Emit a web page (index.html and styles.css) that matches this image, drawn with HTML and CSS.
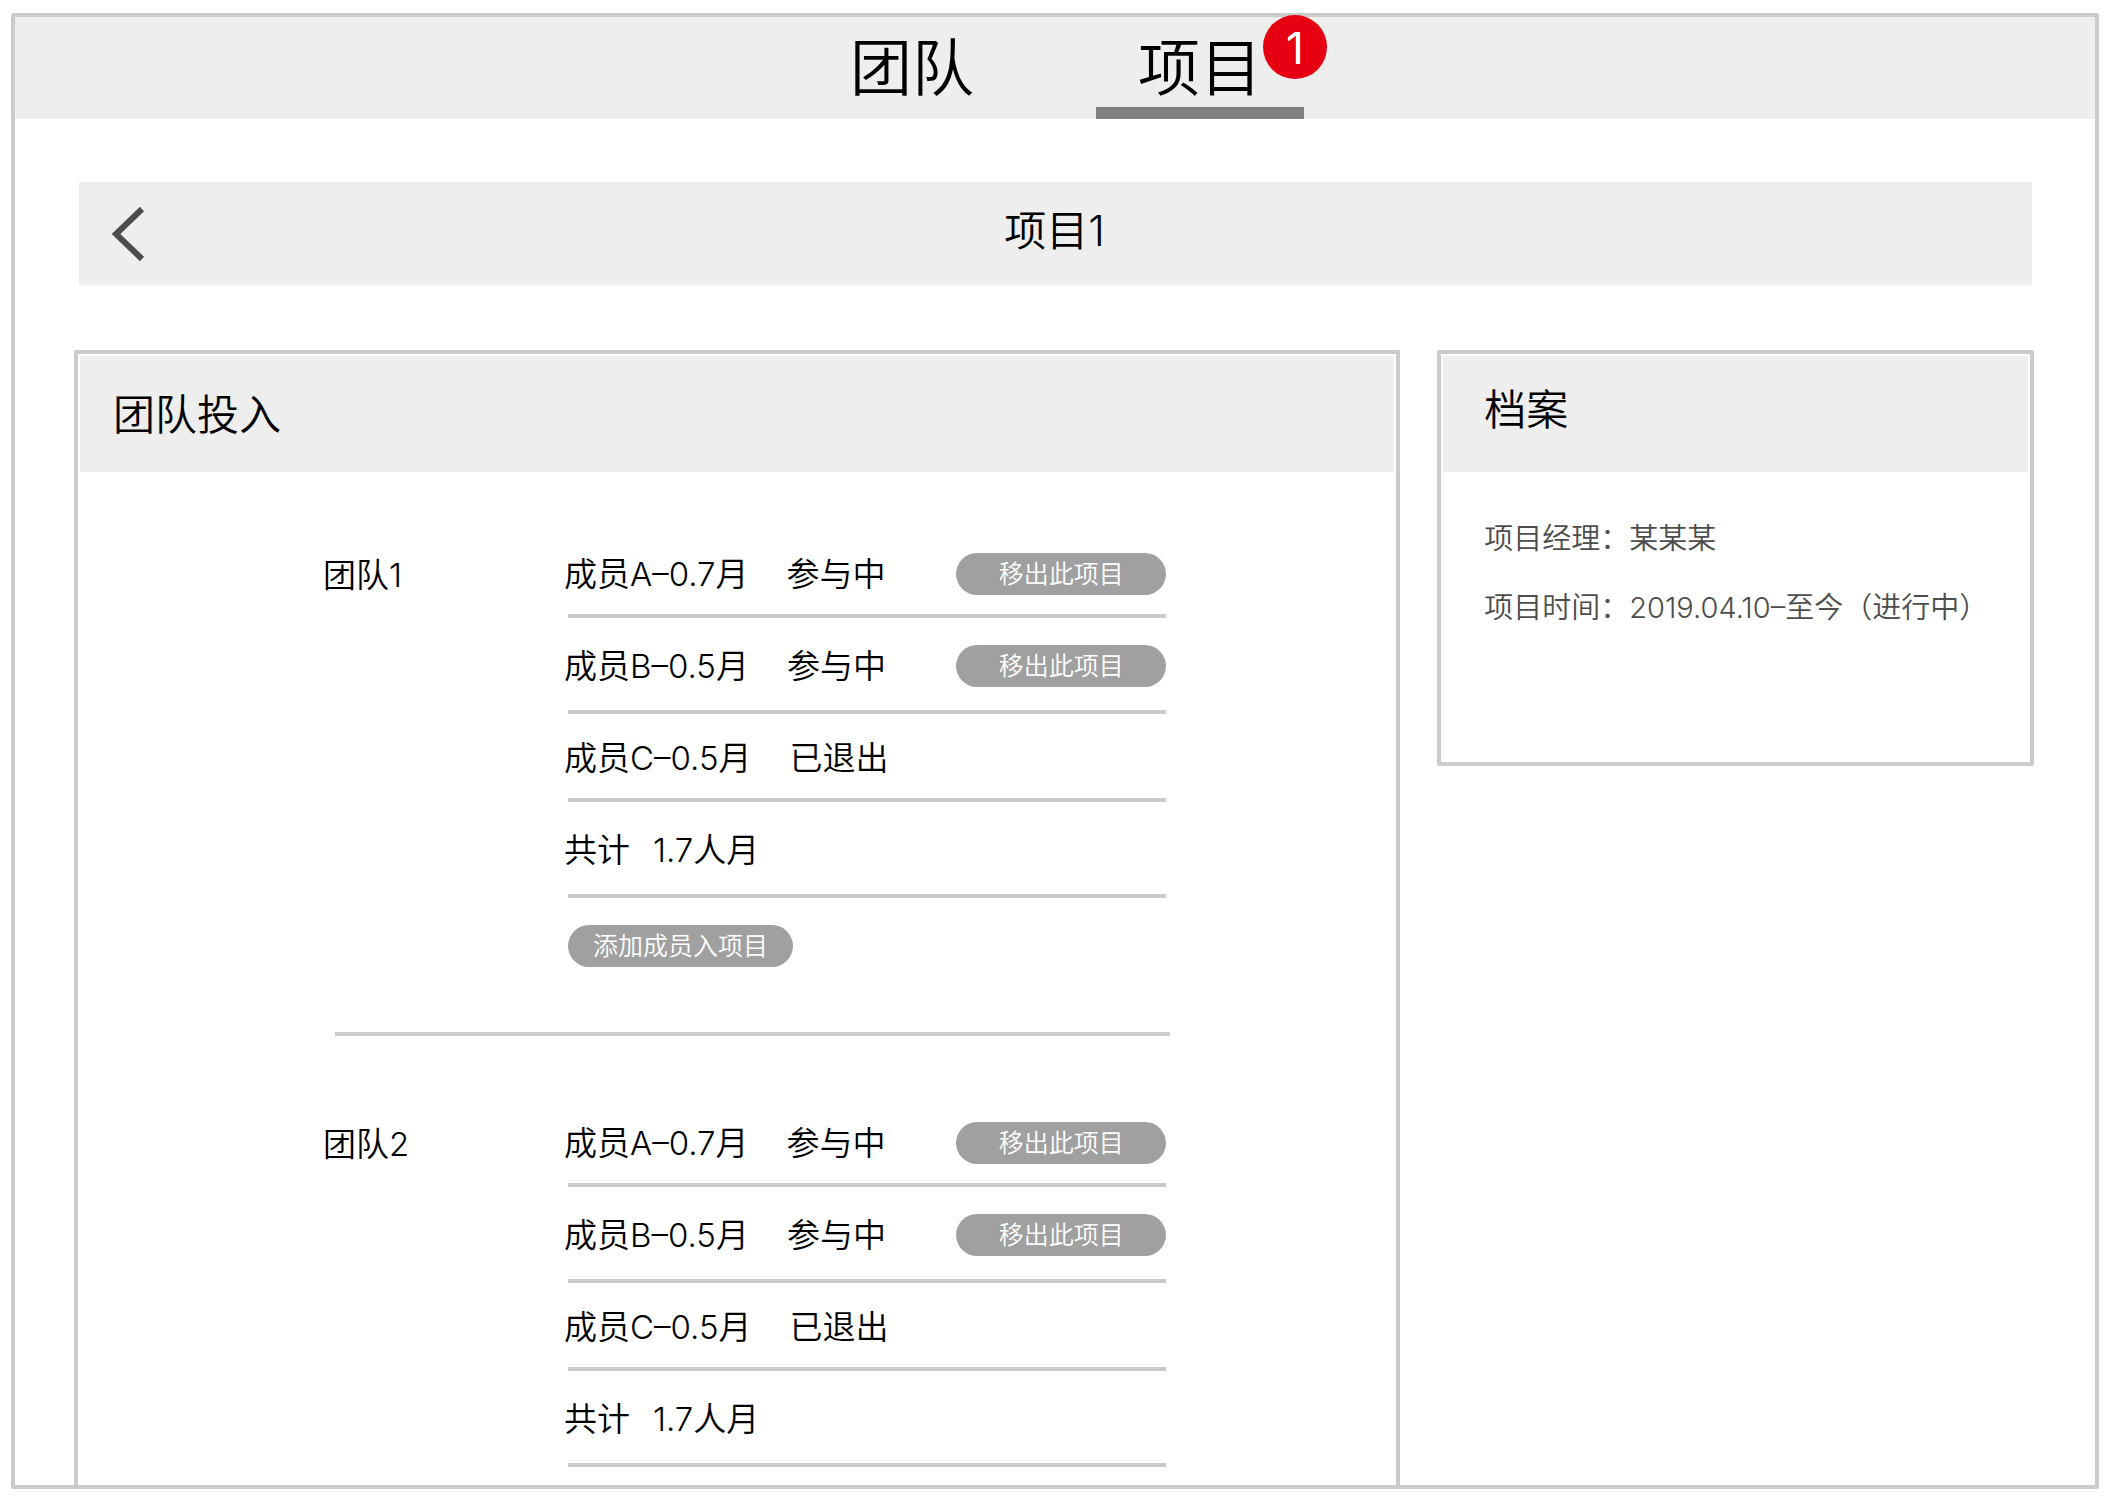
FILE: index.html
```html
<!DOCTYPE html>
<html lang="zh-CN">
<head>
<meta charset="utf-8">
<meta name="viewport" content="width=device-width, initial-scale=1">
<title>项目1</title>
<link rel="stylesheet" href="styles.css">
</head>
<body>
<div class="frame">
  <nav class="tabs">
    <a class="tab" href="#team">团队</a>
    <a class="tab tab-active" href="#project" aria-current="page">项目<span class="badge">1</span></a>
  </nav>

  <header class="title-bar">
    <button class="back" type="button" aria-label="返回">
      <svg width="34" height="56" viewBox="0 0 34 56" fill="none" stroke="#4d4d4d" stroke-width="6"><path d="M31 3 5 28l26 25"/></svg>
    </button>
    <h1 class="title">项目1</h1>
  </header>

  <main class="panels">
    <section class="panel panel-open">
      <h2 class="panel-head">团队投入</h2>
      <div class="teams">
        <section class="team">
          <h3 class="team-name">团队1</h3>
          <div class="team-body">
            <ul class="members">
              <li class="member"><span class="member-text">成员A–0.7月</span><span class="status">参与中</span><button class="pill pill-remove" type="button">移出此项目</button></li>
              <li class="member"><span class="member-text">成员B–0.5月</span><span class="status">参与中</span><button class="pill pill-remove" type="button">移出此项目</button></li>
              <li class="member"><span class="member-text">成员C–0.5月</span><span class="status">已退出</span></li>
              <li class="member"><span class="member-text">共计</span><span class="total">1.7人月</span></li>
            </ul>
            <button class="pill pill-add" type="button">添加成员入项目</button>
          </div>
        </section>
        <hr class="divider">
        <section class="team">
          <h3 class="team-name">团队2</h3>
          <div class="team-body">
            <ul class="members">
              <li class="member"><span class="member-text">成员A–0.7月</span><span class="status">参与中</span><button class="pill pill-remove" type="button">移出此项目</button></li>
              <li class="member"><span class="member-text">成员B–0.5月</span><span class="status">参与中</span><button class="pill pill-remove" type="button">移出此项目</button></li>
              <li class="member"><span class="member-text">成员C–0.5月</span><span class="status">已退出</span></li>
              <li class="member"><span class="member-text">共计</span><span class="total">1.7人月</span></li>
            </ul>
          </div>
        </section>
      </div>
    </section>

    <section class="panel">
      <h2 class="panel-head panel-head-file">档案</h2>
      <div class="file">
        <p class="file-line">项目经理：某某某</p>
        <p class="file-line">项目时间：2019.04.10–至今（进行中）</p>
      </div>
    </section>
  </main>
</div>
</body>
</html>
```
FILE: styles.css
```css
* {
  box-sizing: border-box;
}

body {
  margin: 13px 13px 11px 11px;
  background: #fff;
  color: #000;
  font-family: Inter, "Noto Sans CJK SC", sans-serif;
  font-weight: 350;
}

h1, h2, h3, p, ul {
  margin: 0;
  padding: 0;
  font-weight: inherit;
}

button {
  padding: 0;
  border: 0;
  font: inherit;
  cursor: pointer;
}

.frame {
  display: flex;
  flex-direction: column;
  min-height: calc(100vh - 24px);
  border: 4px solid #cbcbcb;
  border-radius: 2px;
}

.tabs {
  display: flex;
  justify-content: center;
  gap: 80px;
  padding-left: 2px;
  background: #eee;
}

.tab {
  position: relative;
  width: 208px;
  height: 102px;
  color: #000;
  font-size: 62px;
  line-height: 104px;
  text-align: center;
  text-decoration: none;
}

.tab-active {
  box-shadow: inset 0 -12px #808080;
}

.badge {
  position: absolute;
  top: -2px;
  right: -23px;
  width: 64px;
  height: 64px;
  border-radius: 50%;
  background: #e60012;
  color: #fff;
  font-size: 44px;
  font-weight: 400;
  line-height: 66px;
}

.title-bar {
  display: grid;
  grid-template-columns: 100px 1fr 100px;
  align-items: center;
  height: 103px;
  margin: 63px 63px 0 64px;
  background: #eee;
}

.back {
  display: flex;
  width: 34px;
  margin-left: 32px;
  background: none;
}

.title {
  padding: 0 2px 6px 0;
  font-size: 42px;
  line-height: 60px;
  text-align: center;
}

.panels {
  display: grid;
  flex: 1;
  grid-template-columns: minmax(0, 20fr) minmax(0, 9fr);
  gap: 37px;
  align-items: start;
  margin: 65px 61px 0 59px;
}

.panel {
  min-height: 416px;
  padding: 2px;
  border: 4px solid #cbcbcb;
  border-radius: 2px;
}

.panel-open {
  align-self: stretch;
  border-bottom: 0;
  border-bottom-left-radius: 0;
  border-bottom-right-radius: 0;
}

.panel-head {
  height: 116px;
  padding-left: 33px;
  background: #eee;
  font-size: 42px;
  line-height: 118px;
}

.panel-head-file {
  padding-left: 41px;
  line-height: 108px;
}

.teams {
  padding: 58px 228px 16px 243px;
  font-size: 33px;
}

.team {
  display: grid;
  grid-template-columns: 245px minmax(0, 1fr);
}

.team-name {
  font-size: 33px;
  line-height: 90px;
}

.members {
  list-style: none;
}

.member {
  display: flex;
  align-items: center;
  height: 88px;
  border-bottom: 4px solid #cbcbcb;
}

.member:nth-child(even) {
  height: 96px;
}

.member-text {
  margin-left: -4px;
}

.status {
  margin-left: 38px;
}

.total {
  margin-left: 23px;
}

.pill {
  height: 42px;
  border-radius: 21px;
  background: #a0a0a0;
  color: #fff;
  font-size: 25px;
  line-height: 42px;
}

.pill-remove {
  width: 210px;
  margin-top: 3px;
  margin-left: auto;
}

.pill-add {
  width: 225px;
  margin-top: 27px;
}

.divider {
  height: 4px;
  margin: 65px -4px 63px 12px;
  border: 0;
  background: #cbcbcb;
}

.file {
  padding: 32px 0 0 41px;
  color: #4d4d4d;
  font-size: 29px;
}

.file-line {
  line-height: 69px;
}
```
